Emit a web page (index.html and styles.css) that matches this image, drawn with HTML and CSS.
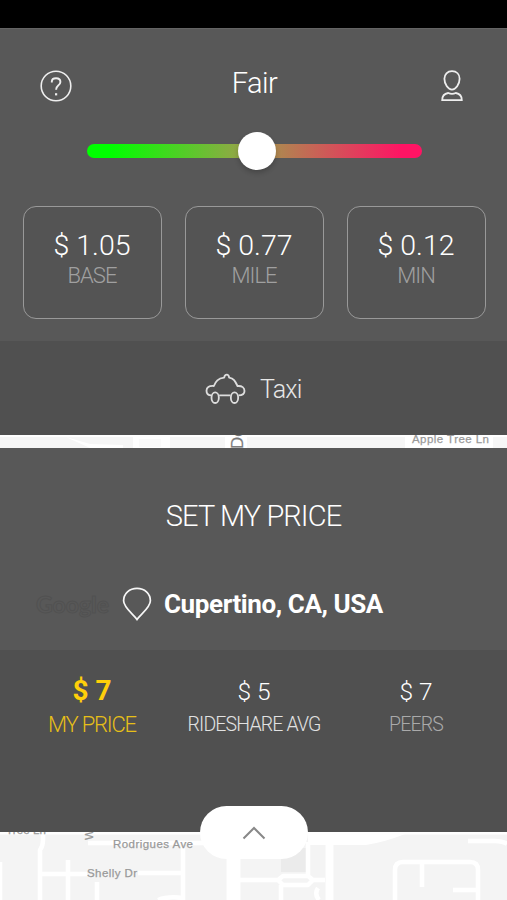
FILE: index.html
```html
<!DOCTYPE html>
<html lang="en">
<head>
<meta charset="utf-8">
<title>Fair</title>
<link rel="stylesheet" href="styles.css">
</head>
<body>
<main class="screen">
  <div class="status"></div>
  <section class="fare">
    <header class="top">
      <svg class="help" viewBox="0 0 32 32"><circle cx="16" cy="16" r="14.8"/><path d="M11.800 12.400v-.7c0-2.200 1.700-3.400 4.300-3.400s4.300 1.300 4.300 3.700c0 1.900-1 2.800-2.400 3.800-1.400 1.100-1.900 1.800-1.900 4"/><path class="dot" d="M16.100 23.200v2.200"/></svg>
      <h1 class="title">Fair</h1>
      <svg class="person" viewBox="0 0 22 32"><path d="M11 1.200c4.600 0 7.600 3 7.600 7.600 0 5.600-3.900 10.800-7.600 10.800S3.400 14.400 3.400 8.800c0-4.600 3-7.600 7.600-7.600z"/><path d="M1.200 30.200c0-4.500 2.800-6.700 6-7.200 1.300.6 2.400.9 3.800.9s2.500-.3 3.800-.9c3.200.5 6 2.700 6 7.200z"/></svg>
    </header>
    <div class="slider"><div class="knob"></div></div>
    <div class="cards">
      <div class="card"><b>$ 1.05</b><span>BASE</span></div>
      <div class="card"><b>$ 0.77</b><span>MILE</span></div>
      <div class="card"><b>$ 0.12</b><span>MIN</span></div>
    </div>
  </section>
  <section class="taxi">
    <svg class="cab" viewBox="46 40 122 96"><path d="M65 107C54 107 50 101 50 93C50 83 57 78 72 79C78 65 84 56 103 54C104 48 107 45 111 45C115 45 117 48 118 54C132 56 136 65 143 79C157 78 164 84 164 94C164 102 158 107 146 107M88 107H122"/><ellipse cx="76" cy="114" rx="11" ry="16"/><ellipse cx="134" cy="114" rx="11" ry="16"/></svg>
    <span>Taxi</span>
  </section>
  <div class="strip">
    <svg viewBox="0 0 507 13"><path class="road" d="M0 0H507V2H0zM66 2L90 9 123 10V13H90L66 2zM133 2h37v11h-37zM225 0h22v13h-22zM405 0h88v13h-88z"/><path class="block" d="M139 4h22v8h-22z"/><text class="big" transform="translate(242.500 14) rotate(-90)">De</text><text x="412" y="8" textLength="77">Apple Tree Ln</text></svg>
  </div>
  <section class="price">
    <h2>SET MY PRICE</h2>
    <div class="place">
      <span class="mark">Google</span>
      <svg class="pin" viewBox="0 0 30 34"><path d="M15 32.600C11 27 1.600 20.500 1.600 13.800C1.600 6.400 7.500 1.300 15 1.300S28.400 6.400 28.400 13.800C28.400 20.500 19 27 15 32.600z"/></svg>
      <strong>Cupertino, CA, USA</strong>
    </div>
  </section>
  <section class="stats">
    <div class="stat mine"><b>$ 7</b><span>MY PRICE</span></div>
    <div class="stat ride"><b>$ 5</b><span>RIDESHARE AVG</span></div>
    <div class="stat peers"><b>$ 7</b><span>PEERS</span></div>
  </section>
  <div class="map">
    <svg viewBox="0 0 507 68">
      <path class="shade" d="M281 16h25v24h-25z"/>
      <path class="rim" d="M0 1H507"/>
      <g class="streets">
        <path d="M43 0V8Q43 14 40 18V68M0 30V68M68 28V68M97 50V68M42 42H87M138 41H182M183 13V68M88 11H205M158 68Q168 64 183 66"/>
        <path d="M240 48H278M283 44H308L313 48 308 53H283L278 48zM281 53V68M308 10V44M313 48H325M319 68Q314 62 318 56"/>
        <path d="M395 68V38Q395 30 403 30H470Q478 30 478 38V68M422 32V55M453 58H477M468 9H495Q503 9 507 12"/>
      </g>
      <path class="road" d="M308 2H405Q385 10 366 13H308z"/>
      <path class="avenue" d="M329.500 0V68"/><path class="wide" d="M233.500 20V68"/>
      <text x="6" y="2" textLength="40">Tree Ln</text>
      <text class="west" transform="translate(93 8) rotate(-90)">W</text>
      <text x="113" y="15.500" textLength="80">Rodrigues Ave</text>
      <text x="87" y="45" textLength="50">Shelly Dr</text>
    </svg>
    <div class="handle"><svg viewBox="0 0 24 14"><path d="M1.500 12.500L12 2 22.500 12.500"/></svg></div>
  </div>
</main>
</body>
</html>
```
FILE: styles.css
```css
* { box-sizing: border-box; }
body { margin: 0; background: #000; font-family: Roboto, "Open Sans", sans-serif; color: #fff; }
.screen { width: 507px; height: 900px; display: flex; flex-direction: column; overflow: hidden; }
svg { display: block; fill: none; }
.status { height: 28px; background: #000; }
.fare { height: 313px; background: #585858; border-top: 1px solid #646464; }
.top { display: flex; justify-content: space-between; padding: 41px 44px 0 40px; height: 115px; }
.help { width: 32px; height: 32px; stroke: #eee; stroke-width: 1.600; }
.help path { stroke-width: 1.900; }
.help .dot { stroke-width: 2.200; }
.person { width: 22px; height: 32px; stroke: #eee; stroke-width: 1.800; }
.title { margin: -7px 4px 0 0; font-size: 29px; line-height: 40px; font-weight: 350; letter-spacing: -.5px; }
.slider { display: flex; justify-content: center; align-items: center; width: 335px; height: 14px; margin: 0 0 0 87px; border-radius: 7px; background: linear-gradient(90deg, #0f0 7%, #9ca14b 48%, #ff1464 94%); }
.knob { width: 38px; height: 38px; margin-left: 4px; flex: none; border-radius: 50%; background: #fff; box-shadow: 0 3px 5px #0003; }
.cards, .stats { display: grid; grid-template-columns: repeat(3, 139px); column-gap: 23px; }
.cards { padding: 48px 0 0 22.500px; }
.card { height: 113px; padding-top: 22px; border: 1px solid #999; border-radius: 13px; background: #545454; text-align: center; }
.card b, .card span, .stat b, .stat span { display: block; white-space: nowrap; }
.card b { font-size: 28.500px; line-height: 34px; font-weight: 350; }
.card span { font-size: 22px; line-height: 26px; font-weight: 300; letter-spacing: -1px; color: #a0a0a0; }
.taxi { height: 94px; background: #505050; display: flex; align-items: center; padding: 2px 0 0 205px; gap: 14px; font-size: 25px; font-weight: 350; letter-spacing: -.8px; color: #e7e7e7; }
.cab { width: 41px; height: 32px; stroke: #ddd; stroke-width: 5.500; stroke-linejoin: round; }
.strip { height: 13px; background: #f6f6f6; overflow: hidden; }
.road { fill: #fff; }
.block { fill: #fafafa; }
text { fill: #999; font: 500 11.500px "Liberation Sans", sans-serif; stroke: #999; stroke-width: .25; }
text.big { font-size: 17px; fill: #777; }
.price { height: 202px; background: #585858; padding-top: 48px; }
h2 { margin: 0; font-size: 29px; line-height: 40px; font-weight: 350; letter-spacing: -.9px; text-align: center; }
.place { display: flex; align-items: center; height: 40px; margin-top: 48px; padding-left: 36px; }
.mark { width: 86px; font: 700 23px/32px Lato, sans-serif; color: #585858; -webkit-text-stroke: 1px #515151; }
.pin { width: 30px; height: 34px; stroke: #f6f6f6; stroke-width: 1.700; }
.place strong { margin-left: 12px; font-size: 26px; line-height: 36px; font-weight: 700; letter-spacing: -.4px; white-space: nowrap; }
.stats { height: 182px; background: #505050; padding: 24px 0 0 22.500px; text-align: center; }
.stat { display: flex; flex-direction: column; align-items: center; }
.stat b { font-size: 24.500px; line-height: 34px; font-weight: 350; padding-top: 1px; margin-bottom: -1px; }
.stat span { font-size: 19.500px; line-height: 34px; font-weight: 300; letter-spacing: -.85px; color: #e2e2e2; }
.mine b { font-size: 28px; font-weight: 700; color: #ffcf0a; padding: 0; margin: 0; }
.mine span { font-size: 22px; letter-spacing: -1.200px; color: #e7bf18; }
.peers span { color: #aaa; }
.map { position: relative; height: 68px; background: #f4f4f4; }
.streets { stroke: #fff; stroke-width: 4.500; stroke-linejoin: round; }
.rim { stroke: #fff; stroke-width: 3; }
.avenue { stroke: #fff; stroke-width: 8; }
.wide { stroke: #fff; stroke-width: 14; }
.shade { fill: #ebebeb; }
.handle { position: absolute; left: 200px; top: -26px; width: 108px; height: 53px; border-radius: 27px; background: #fff; display: flex; justify-content: center; align-items: center; }
.handle svg { width: 24px; height: 14px; stroke: #888; stroke-width: 2; }
```
